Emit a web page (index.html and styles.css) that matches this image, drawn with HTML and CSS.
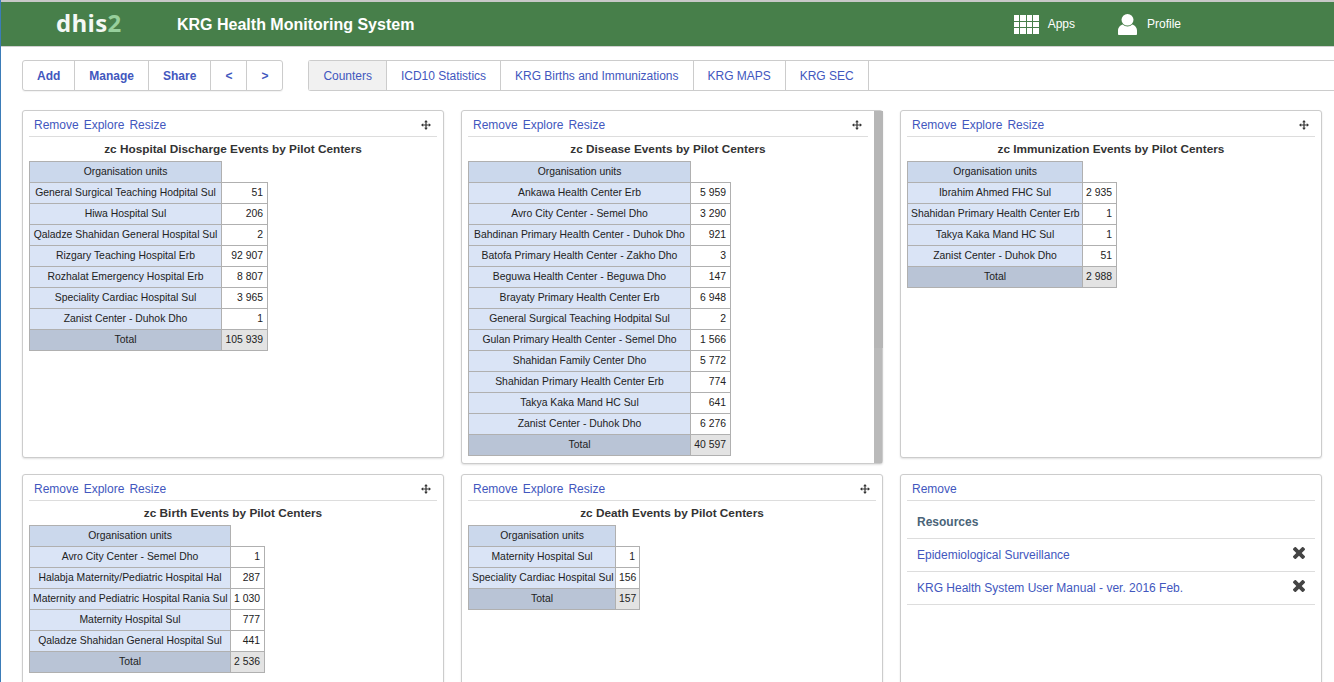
FILE: index.html
```html
<!DOCTYPE html>
<html lang="en">
<head>
<meta charset="utf-8">
<title>KRG Health Monitoring System</title>
<link rel="stylesheet" href="styles.css">
</head>
<body>
<svg class="defs" width="0" height="0" aria-hidden="true">
  <symbol id="move" viewBox="0 0 10 10">
    <path d="M5 0 6.800 2.200H5.600V4.400H7.800V3.200L10 5 7.800 6.800V5.600H5.600V7.800H6.800L5 10 3.200 7.800H4.400V5.600H2.200V6.800L0 5 2.200 3.200V4.400H4.400V2.200H3.200Z"/>
  </symbol>
  <symbol id="cross" viewBox="0 0 12 12">
    <path d="M3 .3 6 3.300 9 .3a1 1 0 0 1 1.400 0l1.300 1.300a1 1 0 0 1 0 1.400L8.700 6l3 3a1 1 0 0 1 0 1.400l-1.300 1.300a1 1 0 0 1-1.400 0L6 8.700l-3 3a1 1 0 0 1-1.400 0L.3 10.400a1 1 0 0 1 0-1.400l3-3-3-3a1 1 0 0 1 0-1.400L1.600.3A1 1 0 0 1 3 .3Z"/>
  </symbol>
</svg>
<header class="topbar">
  <div class="logo">dhis<span class="logo-two">2</span></div>
  <div class="app-title">KRG Health Monitoring System</div>
  <div class="top-menu">
    <a class="top-item top-apps" href="#">
      <svg class="apps-icon" width="25" height="19" viewBox="0 0 25 19"><path d="M0 0h5v6H0zM6 0h6v6H6zM13 0h5v6h-5zM19 0h6v6h-6zM0 7h5v5H0zM6 7h6v5H6zM13 7h5v5h-5zM19 7h6v5h-6zM0 13h5v6H0zM6 13h6v6H6zM13 13h5v6h-5zM19 13h6v6h-6z"/></svg>
      <span>Apps</span>
    </a>
    <a class="top-item top-profile" href="#">
      <svg class="profile-icon" width="19" height="21" viewBox="0 0 19 21"><ellipse cx="9.500" cy="5.800" rx="6" ry="5.800"/><path d="M0 20V16.500C0 13.500 2.500 11 4.800 10.500 6 11.700 7.700 12.500 9.500 12.500S13 11.700 14.200 10.500C16.500 11 19 13.500 19 16.500V20C19 20.600 18.500 21 18 21H1C.5 21 0 20.600 0 20Z"/></svg>
      <span>Profile</span>
    </a>
  </div>
</header>

<nav class="toolbar">
  <div class="btn-group">
    <a class="btn" href="#">Add</a>
    <a class="btn" href="#">Manage</a>
    <a class="btn" href="#">Share</a>
    <a class="btn" href="#">&lt;</a>
    <a class="btn" href="#">&gt;</a>
  </div>
  <div class="tabs">
    <a class="tab tab-active" href="#">Counters</a>
    <a class="tab" href="#">ICD10 Statistics</a>
    <a class="tab" href="#">KRG Births and Immunizations</a>
    <a class="tab" href="#">KRG MAPS</a>
    <a class="tab" href="#">KRG SEC</a>
  </div>
</nav>

<main class="grid">
  <section class="card">
    <div class="card-head">
      <div class="card-links"><a href="#">Remove</a><a href="#">Explore</a><a href="#">Resize</a></div>
      <svg class="move-icon"><use href="#move"/></svg>
    </div>
    <h3 class="card-title">zc Hospital Discharge Events by Pilot Centers</h3>
    <table class="pivot pivot-discharge">
      <tr><th>Organisation units</th></tr>
      <tr><td class="org">General Surgical Teaching Hodpital Sul</td><td class="val">51</td></tr>
      <tr><td class="org">Hiwa Hospital Sul</td><td class="val">206</td></tr>
      <tr><td class="org">Qaladze Shahidan General Hospital Sul</td><td class="val">2</td></tr>
      <tr><td class="org">Rizgary Teaching Hospital Erb</td><td class="val">92 907</td></tr>
      <tr><td class="org">Rozhalat Emergency Hospital Erb</td><td class="val">8 807</td></tr>
      <tr><td class="org">Speciality Cardiac Hospital Sul</td><td class="val">3 965</td></tr>
      <tr><td class="org">Zanist Center - Duhok Dho</td><td class="val">1</td></tr>
      <tr><td class="total">Total</td><td class="val grand">105 939</td></tr>
    </table>
  </section>

  <section class="card card-scroll">
    <div class="card-head">
      <div class="card-links"><a href="#">Remove</a><a href="#">Explore</a><a href="#">Resize</a></div>
      <svg class="move-icon"><use href="#move"/></svg>
    </div>
    <h3 class="card-title">zc Disease Events by Pilot Centers</h3>
    <table class="pivot pivot-disease">
      <tr><th>Organisation units</th></tr>
      <tr><td class="org">Ankawa Health Center Erb</td><td class="val">5 959</td></tr>
      <tr><td class="org">Avro City Center - Semel Dho</td><td class="val">3 290</td></tr>
      <tr><td class="org">Bahdinan Primary Health Center - Duhok Dho</td><td class="val">921</td></tr>
      <tr><td class="org">Batofa Primary Health Center - Zakho Dho</td><td class="val">3</td></tr>
      <tr><td class="org">Beguwa Health Center - Beguwa Dho</td><td class="val">147</td></tr>
      <tr><td class="org">Brayaty Primary Health Center Erb</td><td class="val">6 948</td></tr>
      <tr><td class="org">General Surgical Teaching Hodpital Sul</td><td class="val">2</td></tr>
      <tr><td class="org">Gulan Primary Health Center - Semel Dho</td><td class="val">1 566</td></tr>
      <tr><td class="org">Shahidan Family Center Dho</td><td class="val">5 772</td></tr>
      <tr><td class="org">Shahidan Primary Health Center Erb</td><td class="val">774</td></tr>
      <tr><td class="org">Takya Kaka Mand HC Sul</td><td class="val">641</td></tr>
      <tr><td class="org">Zanist Center - Duhok Dho</td><td class="val">6 276</td></tr>
      <tr><td class="total">Total</td><td class="val grand">40 597</td></tr>
    </table>
    <div class="scrollbar"><div class="scroll-thumb"></div></div>
  </section>

  <section class="card">
    <div class="card-head">
      <div class="card-links"><a href="#">Remove</a><a href="#">Explore</a><a href="#">Resize</a></div>
      <svg class="move-icon"><use href="#move"/></svg>
    </div>
    <h3 class="card-title">zc Immunization Events by Pilot Centers</h3>
    <table class="pivot pivot-immunization">
      <tr><th>Organisation units</th></tr>
      <tr><td class="org">Ibrahim Ahmed FHC Sul</td><td class="val">2 935</td></tr>
      <tr><td class="org">Shahidan Primary Health Center Erb</td><td class="val">1</td></tr>
      <tr><td class="org">Takya Kaka Mand HC Sul</td><td class="val">1</td></tr>
      <tr><td class="org">Zanist Center - Duhok Dho</td><td class="val">51</td></tr>
      <tr><td class="total">Total</td><td class="val grand">2 988</td></tr>
    </table>
  </section>

  <section class="card">
    <div class="card-head">
      <div class="card-links"><a href="#">Remove</a><a href="#">Explore</a><a href="#">Resize</a></div>
      <svg class="move-icon"><use href="#move"/></svg>
    </div>
    <h3 class="card-title">zc Birth Events by Pilot Centers</h3>
    <table class="pivot pivot-birth">
      <tr><th>Organisation units</th></tr>
      <tr><td class="org">Avro City Center - Semel Dho</td><td class="val">1</td></tr>
      <tr><td class="org">Halabja Maternity/Pediatric Hospital Hal</td><td class="val">287</td></tr>
      <tr><td class="org">Maternity and Pediatric Hospital Rania Sul</td><td class="val">1 030</td></tr>
      <tr><td class="org">Maternity Hospital Sul</td><td class="val">777</td></tr>
      <tr><td class="org">Qaladze Shahidan General Hospital Sul</td><td class="val">441</td></tr>
      <tr><td class="total">Total</td><td class="val grand">2 536</td></tr>
    </table>
  </section>

  <section class="card">
    <div class="card-head">
      <div class="card-links"><a href="#">Remove</a><a href="#">Explore</a><a href="#">Resize</a></div>
      <svg class="move-icon"><use href="#move"/></svg>
    </div>
    <h3 class="card-title">zc Death Events by Pilot Centers</h3>
    <table class="pivot pivot-death">
      <tr><th>Organisation units</th></tr>
      <tr><td class="org">Maternity Hospital Sul</td><td class="val">1</td></tr>
      <tr><td class="org">Speciality Cardiac Hospital Sul</td><td class="val">156</td></tr>
      <tr><td class="total">Total</td><td class="val grand">157</td></tr>
    </table>
  </section>

  <section class="card">
    <div class="card-head">
      <div class="card-links"><a href="#">Remove</a></div>
    </div>
    <div class="res-title">Resources</div>
    <div class="res-item"><a href="#">Epidemiological Surveillance</a><svg class="cross-icon"><use href="#cross"/></svg></div>
    <div class="res-item"><a href="#">KRG Health System User Manual - ver. 2016 Feb.</a><svg class="cross-icon"><use href="#cross"/></svg></div>
  </section>
</main>
</body>
</html>
```
FILE: styles.css
```css
* { box-sizing: border-box; }
html, body { height: 682px; overflow: hidden; }
body {
  margin: 0;
  border-left: 1px solid #3b7cb8;
  background: #fff;
  font-family: "Liberation Sans", Arial, sans-serif;
  font-size: 12px;
  color: #222;
}
a { color: #4257be; text-decoration: none; }
.defs { position: absolute; }

.topbar {
  display: flex;
  align-items: center;
  height: 47px;
  padding-left: 55px;
  background: #477f4a;
  border-top: 2px solid #c8c8c8;
  border-bottom: 1px solid #d0d0d0;
  color: #fff;
}
.logo {
  width: 121px;
  padding-bottom: 2px;
  font-family: "Open Sans", sans-serif;
  font-size: 24px;
  font-weight: 700;
  letter-spacing: .3px;
  line-height: 1;
  color: #f4f8f4;
}
.logo-two { color: #97cf9c; }
.app-title { padding-top: 1px; font-size: 16px; font-weight: 700; }
.top-menu { display: flex; align-items: center; margin-left: auto; }
.top-item { display: flex; align-items: center; color: #fff; font-size: 12px; }
.top-apps { gap: 9px; margin-right: 43px; }
.top-profile { gap: 10px; margin-right: 153px; }
.apps-icon, .profile-icon { fill: #fff; }

.toolbar {
  display: flex;
  gap: 25px;
  margin: 13px 0 19px 21px;
  height: 31px;
}
.btn-group {
  display: flex;
  border: 1px solid #ccc;
  border-radius: 3px;
  box-shadow: 0 1px 1px rgba(0, 0, 0, .05);
}
.btn {
  display: flex;
  align-items: center;
  padding: 0 14px;
  border-right: 1px solid #ccc;
  font-weight: 700;
}
.btn:last-child { border-right: 0; }
.tabs {
  display: flex;
  flex: 1;
  border: 1px solid #ccc;
  border-right: 0;
  border-radius: 3px 0 0 3px;
  letter-spacing: -.02px;
}
.tab {
  display: flex;
  align-items: center;
  padding: 0 14px;
  border-right: 1px solid #ccc;
}
.tab-active { background: #f1f1f1; }

.grid {
  display: grid;
  grid-template-columns: repeat(3, 422px);
  grid-template-rows: 354px 300px;
  column-gap: 17px;
  row-gap: 10px;
  align-items: start;
  margin-left: 21px;
}
.card {
  position: relative;
  height: 348px;
  padding: 0 6px;
  border: 1px solid #ccc;
  border-radius: 3px;
  box-shadow: 0 1px 2px rgba(0, 0, 0, .12);
  background: #fff;
}
.card:nth-child(n+4) { height: 300px; }
.card-scroll { height: 354px; padding-right: 14px; }
.card-head {
  display: flex;
  align-items: center;
  justify-content: space-between;
  height: 26px;
  padding: 2px 5px 0;
  border-bottom: 1px solid #ddd;
}
.card-links { display: flex; gap: 5px; }
.move-icon { width: 10px; height: 10px; margin-right: 1px; fill: #333; }
.card-title {
  margin: 0;
  height: 24px;
  font-size: 11.8px;
  line-height: 24px;
  font-weight: 700;
  text-align: center;
  color: #333;
}
.scrollbar {
  position: absolute;
  top: 0;
  right: 0;
  bottom: 0;
  width: 8px;
  background: #bababa;
}
.scroll-thumb { height: 237px; margin-right: -1px; background: #b6b6b6; }

.pivot {
  table-layout: fixed;
  border-collapse: collapse;
  font-size: 10.4px;
  color: #222;
}
.pivot th, .pivot td {
  height: 21px;
  padding: 0 3px 2px;
  border: 1px solid #b0b0b0;
  font-weight: 400;
  white-space: nowrap;
}
.pivot th { background: #cbd8ec; text-align: center; }
.pivot td.val { padding-right: 4px; }
.pivot-discharge { width: 239px; }
.pivot-discharge th { width: 192px; }
.pivot-disease { width: 263px; }
.pivot-disease th { width: 222px; }
.pivot-immunization { width: 210px; }
.pivot-immunization th { width: 175px; }
.pivot-birth { width: 236px; }
.pivot-birth th { width: 201px; }
.pivot-death { width: 172px; }
.pivot-death th { width: 147px; }
.org { background: #dae4f6; text-align: center; }
.total { background: #b9c4d6; text-align: center; }
.val { background: #fff; text-align: right; }
.grand { background: #e3e3e3; }

.res-title {
  height: 38px;
  padding-left: 10px;
  border-bottom: 1px solid #ddd;
  font-weight: 700;
  line-height: 43px;
  color: #4a6478;
}
.res-item {
  display: flex;
  align-items: center;
  justify-content: space-between;
  height: 33px;
  padding: 0 10px;
  border-bottom: 1px solid #ddd;
}
.cross-icon { width: 12px; height: 12px; margin-bottom: 4px; fill: #444; }
```
